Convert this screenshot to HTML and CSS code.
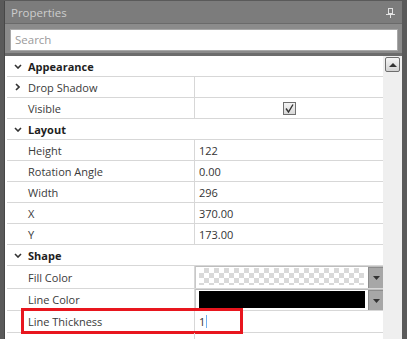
FILE: index.html
```html
<!DOCTYPE html>
<html lang="en">
<head>
  <meta charset="UTF-8">
  <title>Properties</title>
  <link rel="stylesheet" href="styles.css">
</head>
<body>
<div class="window">
  <div class="inner">
    <div class="title">
      <span>Properties</span>
      <svg class="pin" width="9" height="10" viewBox="0 0 9 10">
        <rect x="2.5" y="0.5" width="4" height="5" fill="none" stroke="#e2e2e2"/>
        <path d="M0 6.5H9M4.5 7V10" stroke="#e2e2e2"/>
      </svg>
    </div>
    <div class="search-bar">
      <div class="search">Search</div>
    </div>
    <div class="grid">
      <div class="list">
        <div class="row cat"><span class="gutter"><svg width="8" height="5" viewBox="0 0 8 5"><path d="M1 1L4 4L7 1" fill="none" stroke="#333" stroke-width="1.6"/></svg></span>Appearance</div>
        <div class="row"><span class="name"><span class="gutter"><svg width="5" height="8" viewBox="0 0 5 8"><path d="M1 1L4 4L1 7" fill="none" stroke="#333" stroke-width="1.6"/></svg></span>Drop Shadow</span><span class="value"></span></div>
        <div class="row"><span class="name">Visible</span><span class="value center">
          <svg width="13" height="13" viewBox="0 0 13 13">
            <defs><linearGradient id="cb" x1="0" y1="0" x2="0" y2="1"><stop offset="0" stop-color="#f6f6f6"/><stop offset="1" stop-color="#d6d6d6"/></linearGradient></defs>
            <rect x="0.5" y="0.5" width="12" height="12" fill="url(#cb)" stroke="#707070"/>
            <path d="M3 6.5L5.5 10L10 2.5" fill="none" stroke="#333" stroke-width="1.4"/>
          </svg>
        </span></div>
        <div class="row cat"><span class="gutter"><svg width="8" height="5" viewBox="0 0 8 5"><path d="M1 1L4 4L7 1" fill="none" stroke="#333" stroke-width="1.6"/></svg></span>Layout</div>
        <div class="row"><span class="name">Height</span><span class="value">122</span></div>
        <div class="row"><span class="name">Rotation Angle</span><span class="value">0.00</span></div>
        <div class="row"><span class="name">Width</span><span class="value">296</span></div>
        <div class="row"><span class="name">X</span><span class="value">370.00</span></div>
        <div class="row"><span class="name">Y</span><span class="value">173.00</span></div>
        <div class="row cat"><span class="gutter"><svg width="8" height="5" viewBox="0 0 8 5"><path d="M1 1L4 4L7 1" fill="none" stroke="#333" stroke-width="1.6"/></svg></span>Shape</div>
        <div class="row tall"><span class="name">Fill Color</span><span class="value combo-cell">
          <span class="combo"><span class="swatch checker"></span><span class="drop"><svg width="7" height="4" viewBox="0 0 7 4"><path d="M0 0H7L3.5 4Z" fill="#333"/></svg></span></span>
        </span></div>
        <div class="row mid"><span class="name">Line Color</span><span class="value combo-cell">
          <span class="combo"><span class="swatch black"></span><span class="drop"><svg width="7" height="4" viewBox="0 0 7 4"><path d="M0 0H7L3.5 4Z" fill="#333"/></svg></span></span>
        </span></div>
        <div class="row mid marked"><span class="name">Line Thickness</span><span class="value">1<span class="caret"></span></span><div class="highlight"></div></div>
        <div class="row"><span class="name"></span><span class="value"></span></div>
      </div>
      <div class="scrollbar">
        <div class="scroll-up"><svg width="8" height="4" viewBox="0 0 8 4"><path d="M0 4H8L4 0Z" fill="#333"/></svg></div>
      </div>
    </div>
  </div>
</div>
</body>
</html>
```

FILE: styles.css
```css
body { margin: 0; font-family: "Open Sans", "Noto Sans", sans-serif; font-size: 11px; background: #5a5a5a; }
.window { width: 407px; height: 339px; box-sizing: border-box; padding: 1px 5px 0 4px; background: #5a5a5a; display: flex; }
.inner { flex: 1; display: flex; flex-direction: column; border-left: 1px solid #474747; min-width: 0; }
.title { height: 22px; background: #7c7c7c; color: #cdcdcd; font-size: 11.5px; display: flex; align-items: center; justify-content: space-between; padding: 0 7px 0 6px; border-bottom: 1px solid #6a6a6a; }
.pin { margin-top: 2px; }
.search-bar { background: #8b8b8b; padding: 5px 4px 2px 5px; border-bottom: 3px solid #6c6c6c; }
.search { height: 22px; box-sizing: border-box; background: #fff; border: 1px solid #a8a8a8; color: #9a9a9a; padding-left: 4px; line-height: 20px; font-size: 11.5px; }
.grid { flex: 1; display: flex; overflow: hidden; }
.list { flex: 1; background: #fff; padding-left: 2px; color: #3a3a3a; }
.row { display: flex; height: 21px; box-sizing: border-box; border-bottom: 1px solid #d7d7d7; align-items: stretch; position: relative; }
.row.tall { height: 23px; }
.row.mid { height: 22px; }
.row.cat { font-weight: bold; color: #1e1e1e; align-items: center; }
.gutter { width: 21px; display: flex; justify-content: center; align-items: center; flex-shrink: 0; }
.name { width: 188px; flex-shrink: 0; border-right: 1px solid #d7d7d7; display: flex; align-items: center; padding-left: 21px; box-sizing: border-box; }
.name .gutter { margin-left: -21px; }
.value { flex: 1; display: flex; align-items: center; padding-left: 4px; color: #333; }
.value.center { justify-content: center; padding-left: 0; }
.combo-cell { padding: 0; align-items: stretch; }
.combo { flex: 1; display: flex; border-top: 1px solid #bdbdbd; border-left: 1px solid #c8c8c8; }
.swatch { flex: 1; margin: 1px 4px 3px 3px; }
.checker { background: conic-gradient(#d9d9d9 25%, #fff 0 50%, #d9d9d9 0 75%, #fff 0) 0 0 / 10px 10px; }
.black { background: #000; margin: 1px 3px 2px 3px; }
.drop { width: 14px; background: #a7a7a7; border-left: 1px solid #8c8c8c; border-top: 1px solid #8c8c8c; display: flex; align-items: center; justify-content: center; }
.caret { width: 1px; height: 13px; background: #6fb0f0; margin-left: 1px; }
.highlight { position: absolute; left: 14px; top: -3px; width: 222px; height: 26px; box-sizing: border-box; border: 3px solid #e8161e; }
.scrollbar { width: 19px; background: #efefef; }
.scroll-up { width: 15px; height: 15px; box-sizing: border-box; margin: 1px 0 0 2px; border: 1px solid #6e6e6e; border-radius: 2px; background: linear-gradient(#f6f6f6, #d2d2d2); display: flex; align-items: center; justify-content: center; }
```
